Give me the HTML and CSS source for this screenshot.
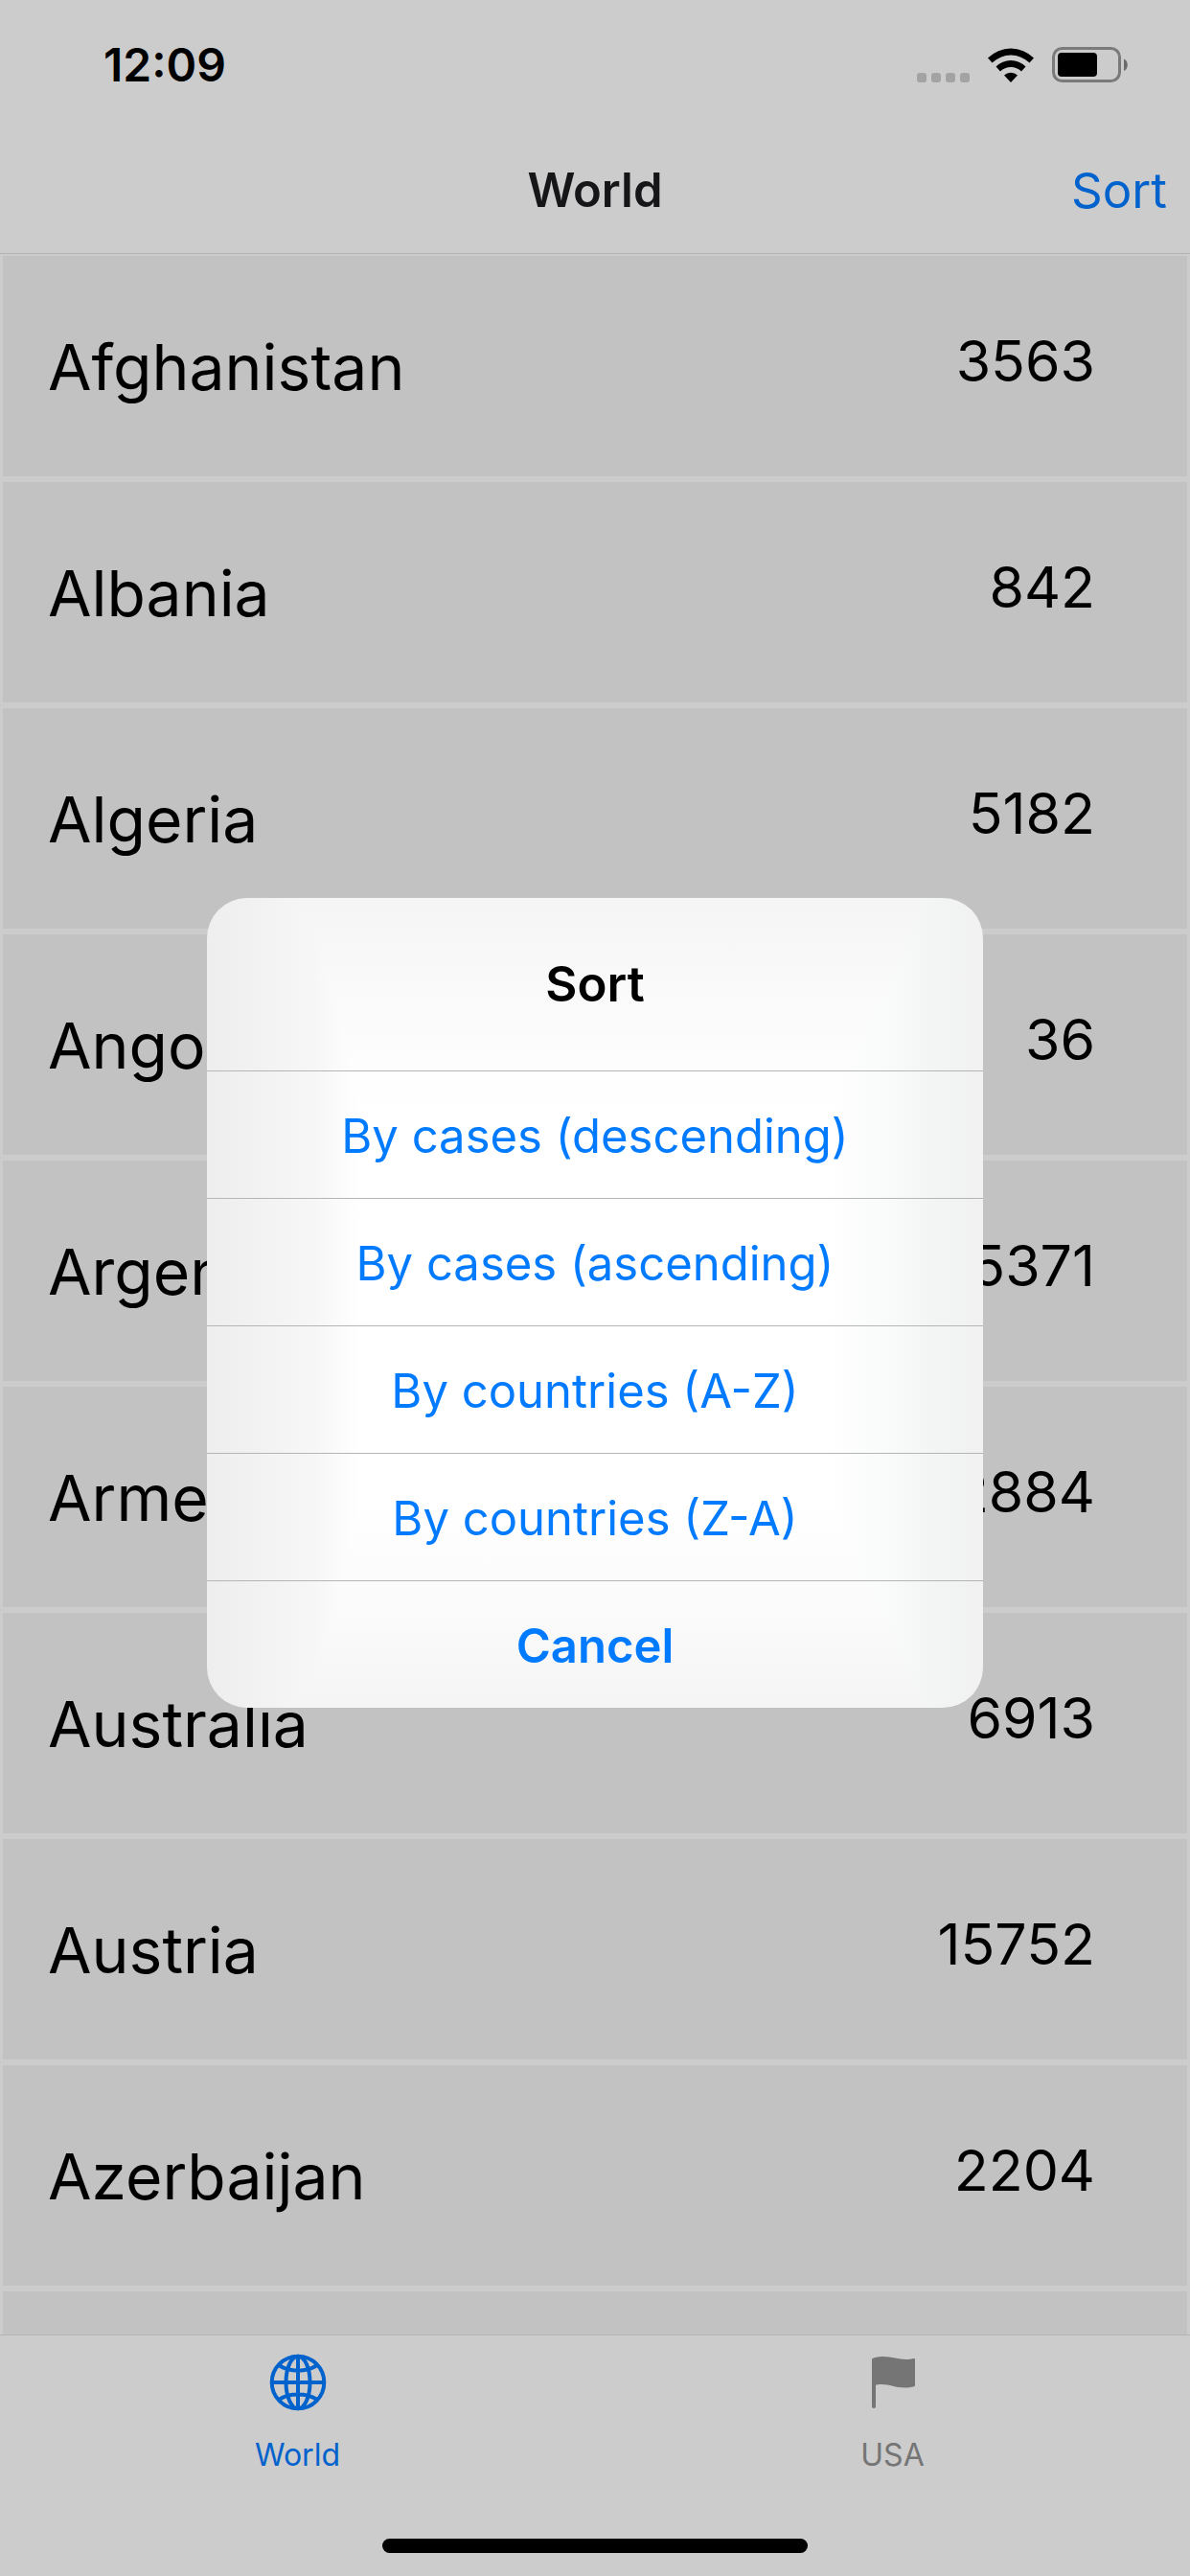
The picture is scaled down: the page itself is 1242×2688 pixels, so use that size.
FILE: index.html
```html
<!DOCTYPE html>
<html lang="en">
<head>
<meta charset="utf-8">
<meta name="viewport" content="width=device-width, initial-scale=1">
<title>World</title>
<link rel="stylesheet" href="styles.css">
</head>
<body>
<div class="app">
  <header class="header">
    <div class="status-bar">
      <time class="clock">12:09</time>
      <div class="indicators">
        <svg class="signal" width="55" height="10" viewBox="0 0 55 10" aria-hidden="true">
          <rect x="0" width="10" height="10" rx="3"/><rect x="15" width="10" height="10" rx="3"/><rect x="30" width="10" height="10" rx="3"/><rect x="45" width="10" height="10" rx="3"/>
        </svg>
        <svg class="wifi" width="48" height="36" viewBox="0 0 48 36" aria-hidden="true">
          <path d="M0 10.500a34 34 0 0 1 48 0l-4.500 5a28 28 0 0 0-39 0z"/>
          <path d="M8.500 19.500a22 22 0 0 1 31 0l-4.500 5a15.500 15.500 0 0 0-22 0z"/>
          <path d="M17 28.500a10.500 10.500 0 0 1 14 0l-7 7.500z"/>
        </svg>
        <svg class="battery" width="80" height="37" viewBox="0 0 80 37" aria-hidden="true">
          <rect class="battery-case" x="1.500" y="1.500" width="69" height="34" rx="9"/>
          <rect x="6" y="6" width="41" height="25" rx="4"/>
          <path class="battery-tip" d="M75 12.500c5 2 5 10.500 0 12.500z"/>
        </svg>
      </div>
    </div>
    <nav class="nav-bar">
      <h1 class="title">World</h1>
      <button class="sort-button" type="button">Sort</button>
    </nav>
  </header>

  <main class="content">
    <ul class="list">
      <li class="row"><span class="country">Afghanistan</span><span class="cases">3563</span></li>
      <li class="row"><span class="country">Albania</span><span class="cases">842</span></li>
      <li class="row"><span class="country">Algeria</span><span class="cases">5182</span></li>
      <li class="row"><span class="country">Angola</span><span class="cases">36</span></li>
      <li class="row"><span class="country">Argentina</span><span class="cases">5371</span></li>
      <li class="row"><span class="country">Armenia</span><span class="cases">2884</span></li>
      <li class="row"><span class="country">Australia</span><span class="cases">6913</span></li>
      <li class="row"><span class="country">Austria</span><span class="cases">15752</span></li>
      <li class="row"><span class="country">Azerbaijan</span><span class="cases">2204</span></li>
      <li class="row row-rest" aria-hidden="true"></li>
    </ul>
  </main>

  <footer class="footer">
    <nav class="tabs">
      <a class="tab tab-active" href="#world">
        <svg class="tab-icon" width="60" height="60" viewBox="0 0 60 60" aria-hidden="true">
          <g fill="none" stroke="currentColor" stroke-width="4">
            <circle cx="30" cy="30" r="27.300"/>
            <ellipse cx="30" cy="30" rx="12.500" ry="27.300"/>
            <path d="M30 3v54M3 30h54M10 12c11 7.500 29 7.500 40 0M10 48c11-7.500 29-7.500 40 0"/>
          </g>
        </svg>
        <span class="tab-label">World</span>
      </a>
      <a class="tab" href="#usa">
        <svg class="tab-icon" width="60" height="60" viewBox="0 0 60 60" aria-hidden="true">
          <path fill="currentColor" d="M8 5.500C10 4 14 3 19 3c10 0 17 3 24 3 4 0 7-.500 9-1 .700-.200 1 0 1 .700V33c0 .700-.300 1-1 1.300-3 .900-6 1.200-10 1.200-9 0-16-3.500-24-3.500-3 0-5 .200-6 .700V55a2 2 0 0 1-4 0z"/>
        </svg>
        <span class="tab-label">USA</span>
      </a>
    </nav>
    <div class="home-indicator"></div>
  </footer>

  <div class="overlay">
    <section class="dialog" role="dialog" aria-modal="true" aria-labelledby="dialog-title">
      <h2 class="dialog-title" id="dialog-title">Sort</h2>
      <button class="action" type="button">By cases (descending)</button>
      <button class="action" type="button">By cases (ascending)</button>
      <button class="action" type="button">By countries (A-Z)</button>
      <button class="action" type="button">By countries (Z-A)</button>
      <button class="action action-cancel" type="button">Cancel</button>
    </section>
  </div>
</div>
</body>
</html>
```

FILE: styles.css
```css
* {
  box-sizing: border-box;
}

body {
  margin: 0;
  background: #cccccc;
  color: #000000;
  font-family: Inter, "Liberation Sans", sans-serif;
}

button {
  margin: 0;
  padding: 0;
  border: 0;
  background: none;
  font: inherit;
}

.app {
  position: relative;
  display: flex;
  flex-direction: column;
  min-height: 100vh;
}

.header {
  border-bottom: 1px solid #b3b3b3;
}

.status-bar {
  display: flex;
  align-items: center;
  justify-content: space-between;
  height: 134px;
  padding: 0 64px 0 108px;
}

.clock {
  font-size: 48px;
  font-weight: 600;
}

.indicators {
  display: flex;
  align-items: flex-end;
  gap: 19px;
}

.signal {
  fill: #a3a3a3;
}

.battery-case {
  fill: none;
  stroke: #7a7a7a;
  stroke-width: 3;
}

.battery-tip {
  fill: #6b6b6b;
}

.nav-bar {
  display: grid;
  grid-template-columns: 1fr auto 1fr;
  align-items: center;
  height: 130px;
  padding: 0 24px 2px;
}

.title {
  grid-column: 2;
  margin: 0;
  color: #161618;
  font-size: 49px;
  font-weight: 600;
}

.sort-button {
  justify-self: end;
  color: #0062cc;
  font-size: 51px;
}

.content {
  display: flex;
  flex: 1;
}

.list {
  display: flex;
  flex: 1;
  flex-direction: column;
  gap: 6px;
  margin: 0;
  padding: 2px 3px 0;
  list-style: none;
}

.row {
  display: flex;
  align-items: center;
  justify-content: space-between;
  height: 230px;
  padding: 0 96px 0 47px;
  background: #c2c2c2;
}

.row-rest {
  flex: 1;
  height: auto;
}

.country {
  padding-top: 2px;
  font-size: 66px;
}

.cases {
  padding-bottom: 12px;
  font-size: 59px;
}

.footer {
  padding-bottom: 24px;
  border-top: 1px solid #b3b3b3;
}

.tabs {
  display: grid;
  grid-template-columns: 1fr 1fr;
}

.tab {
  display: flex;
  flex-direction: column;
  align-items: center;
  gap: 26px;
  padding: 19px 0 67px;
  color: #757575;
  text-decoration: none;
}

.tab-active {
  color: #0062cc;
}

.tab-label {
  font-size: 32px;
  line-height: 40px;
}

.home-indicator {
  width: 444px;
  height: 15px;
  margin: 0 auto;
  border-radius: 8px;
  background: #000000;
}

.overlay {
  position: absolute;
  inset: 0;
  display: grid;
  place-items: center;
  padding-top: 31px;
}

.dialog {
  display: flex;
  flex-direction: column;
  width: 810px;
  overflow: hidden;
  border-radius: 42px;
  background:
    linear-gradient(90deg, #eeeeee 0%, #f1f2f1 7%, #f7f7f7 14%, #ffffff 20%, #ffffff 80%, #f9fafa 88%, #f3f4f4 94%, #f1f1f1 100%),
    linear-gradient(180deg, #f5f5f5 0%, #fafafa 12%, #fefefe 22%, #ffffff 30%, #ffffff 74%, #fcfcfc 84%, #f5f5f5 100%);
  background-blend-mode: darken;
}

.dialog-title {
  margin: 0;
  font-size: 51px;
  font-weight: 600;
  line-height: 180px;
  text-align: center;
}

.action {
  height: 133px;
  padding-top: 2px;
  border-top: 1px solid #b4b6b5;
  color: #007aff;
  font-size: 49px;
}

.action-cancel {
  font-weight: 600;
}
```
